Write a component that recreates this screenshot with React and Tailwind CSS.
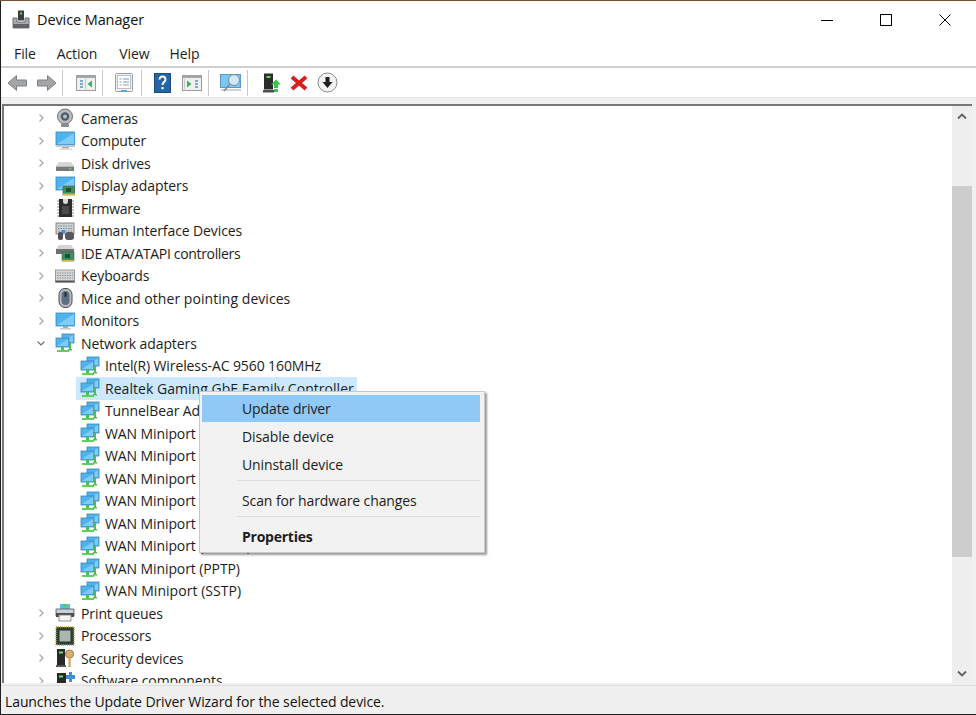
const Svg = ({ w = 20, h = 20, children }) => (
  <svg width={w} height={h} viewBox={`0 0 ${w} ${h}`} className="shrink-0 block">{children}</svg>
);
const Mon = ({ x = 1, y = 2, w = 18, h = 12 }) => (
  <g>
    <rect x={x} y={y} width={w} height={h} fill="#4fb4ee" stroke="#3d86b8" strokeWidth="0.8" />
    <polygon points={`${x + 1},${y + h - 1} ${x + w - 1},${y + 1} ${x + w - 1},${y + h - 1}`} fill="#7fcdf6" />
  </g>
);
const Icons = {
  camera: (
    <Svg>
      <circle cx="10" cy="8.5" r="7.5" fill="#b9bcbf" stroke="#6b6e72" />
      <circle cx="10" cy="8.5" r="4.2" fill="#55585c" />
      <circle cx="10" cy="8.5" r="2" fill="#a9c7dd" />
      <rect x="6" y="16" width="8" height="3" rx="1" fill="#8a8d90" />
    </Svg>
  ),
  computer: (
    <Svg>
      <Mon x={1} y={1} w={19} h={13} />
      <rect x="1" y="14.5" width="19" height="1.5" fill="#c3c7ca" />
      <rect x="7" y="16" width="7" height="1.5" fill="#a4a8ab" />
      <rect x="4" y="17.5" width="13" height="1.5" fill="#d5d8da" />
    </Svg>
  ),
  disk: (
    <Svg>
      <path d="M4 9h12l3 4v5H1v-5z" fill="#d4d6d7" />
      <rect x="1" y="13" width="18" height="5" fill="#77797b" />
      <rect x="1" y="13" width="18" height="1" fill="#b9bbbd" />
      <rect x="14" y="15" width="2.5" height="1.5" fill="#62d262" />
    </Svg>
  ),
  display: (
    <Svg>
      <Mon x={1} y={1} w={19} h={13} />
      <rect x="8" y="10" width="12" height="9" fill="#3f8f58" stroke="#555" strokeWidth="0.6" />
      <rect x="11" y="12" width="5" height="4" fill="#20502f" />
      <rect x="8" y="17.5" width="12" height="1.5" fill="#d8b650" />
    </Svg>
  ),
  firmware: (
    <Svg>
      <rect x="4" y="1" width="13" height="18" fill="#2c2c2e" />
      <path d="M8 1h5v2.5a2.5 2.5 0 0 1-5 0z" fill="#d9d9d9" />
      <path d="M2 3h2M2 6h2M2 9h2M2 12h2M2 15h2M2 18h2M17 3h2M17 6h2M17 9h2M17 12h2M17 15h2M17 18h2" stroke="#8a8a8a" />
      <rect x="7" y="8" width="7" height="8" fill="#4a4a4c" />
    </Svg>
  ),
  hid: (
    <Svg>
      <rect x="1" y="2" width="18" height="11" fill="#cfd2d5" stroke="#6d7175" strokeWidth="0.8" />
      <path d="M3 5h14M3 7.5h14M3 10h14" stroke="#85898d" strokeDasharray="1.5 1" />
      <rect x="3" y="11" width="5" height="8" rx="2" fill="#4d5054" />
      <rect x="10" y="11" width="9" height="8" rx="3" fill="#56595d" />
      <rect x="7" y="9" width="3" height="3" fill="#3a8fdc" />
    </Svg>
  ),
  ide: (
    <Svg>
      <path d="M4 2h12l3 4v5H1V6z" fill="#d2d4d5" />
      <rect x="1" y="6" width="18" height="5" fill="#6d6f71" />
      <rect x="7" y="9" width="12" height="9" fill="#3f8f58" stroke="#555" strokeWidth="0.6" />
      <rect x="10" y="11" width="5" height="4" fill="#20502f" />
      <rect x="7" y="17" width="12" height="1.5" fill="#d8b650" />
    </Svg>
  ),
  keyboard: (
    <Svg>
      <rect x="0.5" y="4" width="19" height="12" fill="#d4d6d8" stroke="#85888b" strokeWidth="0.8" />
      <path d="M2 7h16M2 9.5h16M2 12h16" stroke="#8c8f92" strokeDasharray="1.5 1" />
      <rect x="0.5" y="14.5" width="19" height="2" fill="#55585b" />
    </Svg>
  ),
  mouse: (
    <Svg>
      <rect x="4" y="0.5" width="13" height="19" rx="6" fill="#b9bdc1" stroke="#45484b" />
      <rect x="6.5" y="3" width="8" height="14" rx="4" fill="#5c6e80" />
      <rect x="9.5" y="4" width="2" height="5" rx="1" fill="#26282a" />
    </Svg>
  ),
  monitor: (
    <Svg>
      <Mon x={1} y={2} w={19} h={13} />
      <rect x="8" y="15" width="5" height="2" fill="#a4a8ab" />
      <rect x="5" y="17" width="11" height="1.5" fill="#c8cbce" />
    </Svg>
  ),
  network: (
    <Svg>
      <Mon x={7} y={1} w={12} h={9} />
      <Mon x={1} y={5} w={13} h={9} />
      <rect x="6" y="14" width="3" height="3" fill="#4cc04c" />
      <rect x="2" y="17" width="12" height="2" fill="#5fd05f" />
      <rect x="14" y="10" width="2" height="7" fill="#4cc04c" />
      <rect x="13" y="16" width="4" height="1.5" fill="#4cc04c" />
    </Svg>
  ),
  printer: (
    <Svg>
      <rect x="5" y="1" width="10" height="5" fill="#53c1ea" />
      <rect x="8" y="1" width="4" height="3" fill="#5bc36b" />
      <path d="M1 6h18v7H1z" fill="#ced1d3" stroke="#55585b" strokeWidth="0.8" />
      <rect x="1" y="10" width="18" height="4" fill="#4a4d50" />
      <rect x="4" y="12" width="12" height="6" fill="#f4f5f6" stroke="#7b7e81" strokeWidth="0.8" />
    </Svg>
  ),
  processor: (
    <Svg>
      <rect x="1" y="1" width="18" height="18" fill="#2e4636" stroke="#b99a4a" strokeDasharray="1 1" strokeWidth="1.4" />
      <rect x="4" y="4" width="12" height="12" fill="#a9b7ae" stroke="#243228" />
    </Svg>
  ),
  security: (
    <Svg>
      <rect x="2" y="1" width="8" height="16" fill="#28292b" />
      <rect x="4" y="3.5" width="4" height="2" fill="#6ae06a" />
      <rect x="1" y="17" width="10" height="2" fill="#55585b" />
      <circle cx="14.5" cy="6" r="4" fill="#d9b070" stroke="#a07a3c" />
      <rect x="13.5" y="9" width="2.2" height="10" fill="#cda264" />
    </Svg>
  ),
  software: (
    <Svg>
      <rect x="2" y="2" width="9" height="16" fill="#28292b" />
      <rect x="4" y="4.5" width="4" height="2" fill="#6ae06a" />
      <path d="M11 4h3V1h3v3h3v4h-3v3h-3V8h-3z" fill="#3c8fe0" />
    </Svg>
  ),
};

const Chevron = ({ open }) => (
  <svg width="10" height="10" viewBox="0 0 10 10" className="block">
    {open ? (
      <path d="M1.5 3.5 5 7l3.5-3.5" fill="none" stroke="#6e6e6e" strokeWidth="1.2" />
    ) : (
      <path d="M3.5 1.5 7 5 3.5 8.5" fill="none" stroke="#a6a6a6" strokeWidth="1.2" />
    )}
  </svg>
);

const Row = ({ icon, label, open, track = "" }) => (
  <div className="h-[22.5px] flex items-center shrink-0">
    <div className="w-[51px] pl-[32px] shrink-0">
      <Chevron open={open} />
    </div>
    {Icons[icon]}
    <span className={`ml-[6px] whitespace-nowrap ${track}`}>{label}</span>
  </div>
);

const Child = ({ label, selected, track = "" }) => (
  <div className={`h-[22.5px] flex items-center shrink-0 ml-[72px] pl-[4px] ${selected ? "bg-[#cce8ff] w-[281px]" : ""}`}>
    {Icons.network}
    <span className={`ml-[5px] whitespace-nowrap ${track}`}>{label}</span>
  </div>
);

const Sep = () => <div className="h-[26px] w-px bg-[#c9c9c9] mx-[5px]" />;

const WinIcon = ({ left }) => (
  <svg width="20" height="20" viewBox="0 0 20 20" className="block">
    <rect x="0.5" y="2.5" width="19" height="15" fill="#eef0f1" stroke="#9a9da0" />
    <rect x="0.5" y="2.5" width="19" height="2.5" fill="#a4a7aa" />
    <path d={left ? "M4 8h3M4 11h3M4 14h3" : "M13 8h3M13 11h3M13 14h3"} stroke="#5b93c7" strokeWidth="1.4" />
    <rect x={left ? 9 : 2} y="6" width="1" height="10" fill="#c5c7c9" />
    <path d={left ? "M16 7.5v7L11.5 11z" : "M5 7.5v7L9.5 11z"} fill="#39b54a" />
  </svg>
);

const Arrow = ({ back }) => (
  <svg width="21" height="18" viewBox="0 0 21 18" className="block">
    <path
      d={back ? "M9.5 1.5v4.5h10v6h-10v4.5L1 9z" : "M11.5 1.5v4.5h-10v6h10v4.5L20 9z"}
      fill="#a3a5a7"
      stroke="#7f8184"
    />
  </svg>
);

function ContextItem({ children, active, bold }) {
  return (
    <div className="pb-px">
      <div className={`h-[27px] pb-px flex items-center pl-[40px] ${active ? "bg-[#90c8f6]" : ""} ${bold ? "font-bold tracking-[-0.25px]" : ""}`}>
        {children}
      </div>
    </div>
  );
}

export default function App() {
  const font = "font-['Open_Sans','Noto_Sans',sans-serif]";
  return (
    <div className={`relative w-[976px] h-[715px] overflow-hidden bg-[#1f1f1f] text-[14px] tracking-[-0.1px] text-[#1c1c1c] ${font}`}>
      <div className="h-px bg-[#7a4f32]" />
      <div className="h-[713px] w-[975px] ml-px bg-white flex flex-col">
        {/* Title bar */}
        <div className="h-[38px] shrink-0 flex items-center pl-[11px]">
          <svg width="18" height="20" viewBox="0 0 18 20" className="block">
            <rect x="6" y="0.5" width="6" height="10" fill="#3c3e40" />
            <rect x="8" y="2.5" width="2" height="2" fill="#56d856" />
            <path d="M1 8h4v4h8V8h4v10H1z" fill="#a9acae" stroke="#57595c" strokeWidth="0.8" />
            <rect x="1" y="14" width="16" height="4" fill="#626467" />
          </svg>
          <span className="ml-[7px] text-[14.5px] text-[#111]">Device Manager</span>
          <div className="ml-auto flex items-center">
            <div className="w-[59px] flex justify-center">
              <div className="w-[12px] h-px bg-black" />
            </div>
            <div className="w-[59px] flex justify-center">
              <div className="w-[12px] h-[12px] border border-black" />
            </div>
            <div className="w-[59px] flex justify-center">
              <svg width="12" height="12" viewBox="0 0 12 12" className="block">
                <path d="M0.5 0.5l11 11M11.5 0.5l-11 11" stroke="#000" strokeWidth="1" />
              </svg>
            </div>
            <div className="w-[2px]" />
          </div>
        </div>
        {/* Menu */}
        <div className="h-[26px] pt-px shrink-0 flex items-center border-b-2 border-[#d0d0d0] box-content">
          <span className="ml-[13px]">File</span>
          <span className="ml-[21px]">Action</span>
          <span className="ml-[22px]">View</span>
          <span className="ml-[20px]">Help</span>
        </div>
        {/* Toolbar */}
        <div className="h-[29px] shrink-0 flex items-center pl-[6px]">
          <Arrow back />
          <div className="w-[8px]" />
          <Arrow />
          <Sep />
          <div className="ml-[8px] mr-[1px]"><WinIcon left /></div>
          <Sep />
          <div className="ml-[6px] mr-[2px]">
            <svg width="20" height="20" viewBox="0 0 20 20" className="block">
              <rect x="1.5" y="0.5" width="17" height="18" rx="1" fill="#f1f2f3" stroke="#9a9da0" />
              <rect x="3.5" y="2.5" width="13" height="13" fill="#fff" stroke="#bcbec0" />
              <path d="M5.5 6h2M9 6h6M5.5 9h2M9 9h6M5.5 12h2M9 12h6" stroke="#7b9cbc" />
              <rect x="7" y="17" width="6" height="2" fill="#58a7e0" />
            </svg>
          </div>
          <Sep />
          <div className="ml-[7px]">
            <svg width="18" height="20" viewBox="0 0 18 20" className="block">
              <rect x="0.5" y="0.5" width="16" height="19" fill="#2465a8" stroke="#1b4a7c" />
              <path d="M5.5 6.5a3 3 0 1 1 4.7 2.4c-1 .8-1.7 1.4-1.7 3" fill="none" stroke="#fff" strokeWidth="2" />
              <rect x="7.4" y="14" width="2.2" height="2.2" fill="#fff" />
            </svg>
          </div>
          <div className="ml-[10px] mr-[1px]"><WinIcon /></div>
          <Sep />
          <div className="ml-[6px] mr-[-1px]">
            <svg width="23" height="20" viewBox="0 0 23 20" className="block">
              <rect x="0.5" y="1.5" width="20" height="13" fill="#7cc6f2" stroke="#5a9bc8" />
              <rect x="1" y="16" width="20" height="2" fill="#d0d3d5" />
              <circle cx="14" cy="7" r="5.5" fill="#cfe9fa" stroke="#7d8a94" />
              <path d="M10 11 4 18" stroke="#7d8a94" strokeWidth="1.6" />
            </svg>
          </div>
          <Sep />
          <div className="ml-[10px]">
            <svg width="18" height="20" viewBox="0 0 18 20" className="block">
              <rect x="1" y="0.5" width="9" height="16" fill="#2b2c2e" />
              <rect x="3.5" y="3" width="4" height="2" fill="#62d862" />
              <rect x="0" y="17" width="11" height="2.5" fill="#4d4f52" />
              <path d="M13 6.5l5 5h-3v3.5h-4v-3.5H8z" fill="#3cc14a" />
              <rect x="11" y="16" width="4" height="3" fill="#3cc14a" />
            </svg>
          </div>
          <div className="ml-[9px]">
            <svg width="18" height="18" viewBox="0 0 18 18" className="block">
              <path d="M2 3l14 12M16 3 2 15" stroke="#d81e1e" strokeWidth="4" />
            </svg>
          </div>
          <div className="ml-[9px]">
            <svg width="21" height="21" viewBox="0 0 21 21" className="block">
              <circle cx="10.5" cy="10.5" r="9.5" fill="#f3f3f3" stroke="#8b8b8b" />
              <path d="M8.5 5h4v5h3l-5 6-5-6h3z" fill="#1d1d1d" />
            </svg>
          </div>
        </div>
        {/* Band */}
        <div className="h-[7px] shrink-0 bg-[#f0f0f0] border-t border-dotted border-[#dcdcdc]" />
        {/* Content */}
        <div className="flex-1 min-h-0 flex flex-col bg-[#f0f0f0]">
          <div className="h-[579px] shrink-0 ml-[1px] mr-[4px] flex border-l-2 border-t-2 border-[#787878] bg-white">
            <div className="flex-1 min-w-0 flex flex-col overflow-hidden pt-px">
              <Row icon="camera" label="Cameras" />
              <Row icon="computer" label="Computer" />
              <Row icon="disk" label="Disk drives" />
              <Row icon="display" label="Display adapters" />
              <Row icon="firmware" label="Firmware" track="tracking-[-0.3px]" />
              <Row icon="hid" label="Human Interface Devices" />
              <Row icon="ide" label="IDE ATA/ATAPI controllers" track="tracking-[-0.33px]" />
              <Row icon="keyboard" label="Keyboards" />
              <Row icon="mouse" label="Mice and other pointing devices" track="tracking-[0.05px]" />
              <Row icon="monitor" label="Monitors" />
              <Row icon="network" label="Network adapters" open />
              <Child label="Intel(R) Wireless-AC 9560 160MHz" />
              <Child label="Realtek Gaming GbE Family Controller" selected track="tracking-[0.04px]" />
              <Child label="TunnelBear Adapter V9" />
              <Child label="WAN Miniport (IKEv2)" />
              <Child label="WAN Miniport (IP)" />
              <Child label="WAN Miniport (IPv6)" />
              <Child label="WAN Miniport (L2TP)" />
              <Child label="WAN Miniport (Network Monitor)" />
              <Child label="WAN Miniport (PPPOE)" />
              <Child label="WAN Miniport (PPTP)" />
              <Child label="WAN Miniport (SSTP)" track="tracking-[0.05px]" />
              <Row icon="printer" label="Print queues" />
              <Row icon="processor" label="Processors" />
              <Row icon="security" label="Security devices" />
              <Row icon="software" label="Software components" />
            </div>
            {/* Scrollbar */}
            <div className="w-[20px] shrink-0 bg-[#eeeeee] flex flex-col">
              <div className="h-[20px] flex items-center justify-center">
                <svg width="10" height="7" viewBox="0 0 10 7" className="block">
                  <path d="M1 5.5 5 1.5l4 4" fill="none" stroke="#606060" strokeWidth="1.8" />
                </svg>
              </div>
              <div className="h-[60px]" />
              <div className="h-[371px] bg-[#cdcdcd]" />
              <div className="flex-1" />
              <div className="h-[20px] flex items-center justify-center">
                <svg width="10" height="7" viewBox="0 0 10 7" className="block">
                  <path d="M1 1.5 5 5.5l4-4" fill="none" stroke="#606060" strokeWidth="1.8" />
                </svg>
              </div>
            </div>
          </div>
          <div className="h-px shrink-0 bg-[#dedede] mt-[2px]" />
          {/* Status */}
          <div className="flex-1 flex items-center pl-[4px] pt-[2px] text-[#111]">
            Launches the Update Driver Wizard for the selected device.
          </div>
        </div>
      </div>

      {/* Context menu */}
      <div className="absolute left-[199px] top-[391px] w-[286px] h-[162px] bg-[#f2f2f2] border border-[#c8c8c8] shadow-[2px_2px_2px_rgba(0,0,0,0.4)] pt-[3px] pl-[2px] pr-[4px]">
        <ContextItem active>Update driver</ContextItem>
        <ContextItem>Disable device</ContextItem>
        <ContextItem>Uninstall device</ContextItem>
        <div className="h-px bg-[#dcdcdc] ml-[35px] mt-[1px]" />
        <div className="mt-[6px]"><ContextItem>Scan for hardware changes</ContextItem></div>
        <div className="h-px bg-[#dcdcdc] ml-[35px] mt-[1px]" />
        <div className="mt-[6px]"><ContextItem bold>Properties</ContextItem></div>
      </div>
    </div>
  );
}
